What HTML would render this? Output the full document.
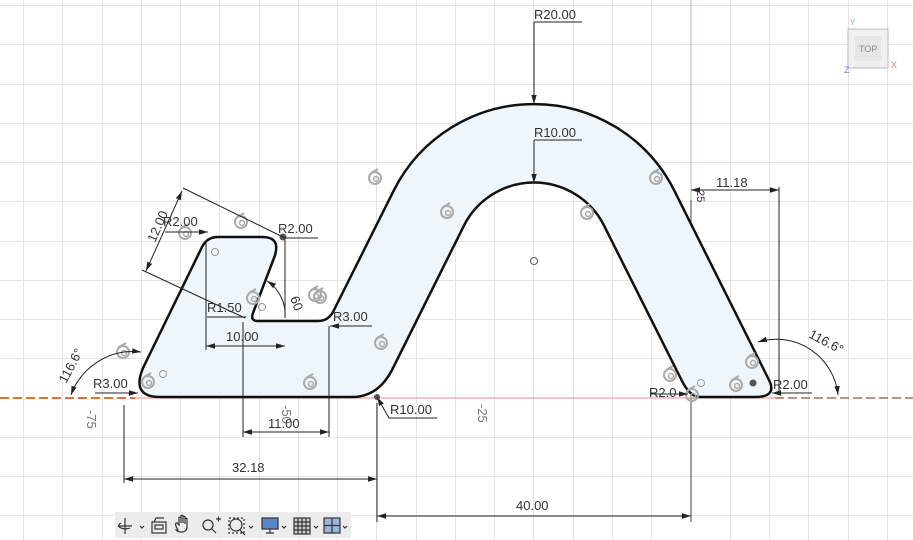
<!DOCTYPE html>
<html><head><meta charset="utf-8"><style>
html,body{margin:0;padding:0;background:#fff;width:913px;height:540px;overflow:hidden}
svg{display:block}
text{font-family:"Liberation Sans",sans-serif;font-size:13px;fill:#333}
</style></head><body>
<svg width="913" height="540" viewBox="0 0 913 540" xmlns="http://www.w3.org/2000/svg">
<defs>
<marker id="a" viewBox="0 0 10 10" refX="10" refY="5" markerWidth="9" markerHeight="9" orient="auto-start-reverse"><path d="M0 2L10 5L0 8z" fill="#222"/></marker>
<g id="c"><circle cx="0" cy="0" r="6" fill="none" stroke="#aaa" stroke-width="2"/><circle cx="1" cy="1" r="2.5" fill="none" stroke="#aaa" stroke-width="1.5"/><path d="M-4 -5L3 -9" stroke="#aaa" stroke-width="2"/></g>
</defs>
<rect width="913" height="540" fill="#fff"/>
<path stroke="#e4e4e4" stroke-width="1" fill="none" d="
M23.5 0V540M62.5 0V540M102.5 0V540M141.5 0V540M180.5 0V540M219.5 0V540M259.5 0V540M298.5 0V540M337.5 0V540M376.5 0V540M416.5 0V540M455.5 0V540M494.5 0V540M533.5 0V540M573.5 0V540M612.5 0V540M651.5 0V540M730.5 0V540M769.5 0V540M808.5 0V540M848.5 0V540M887.5 0V540
M0 5.5H913M0 44.5H913M0 84.5H913M0 123.5H913M0 162.5H913M0 201.5H913M0 241.5H913M0 280.5H913M0 319.5H913M0 358.5H913M0 437.5H913M0 476.5H913M0 515.5H913"/>
<!-- axes -->
<line x1="130" y1="398" x2="775" y2="398" stroke="#f4b0b0" stroke-width="1.5"/>
<line x1="0" y1="398" x2="135" y2="398" stroke="#d9733a" stroke-width="2" stroke-dasharray="9,4"/>
<line x1="775" y1="398" x2="913" y2="398" stroke="#a0705a" stroke-width="1.5" stroke-dasharray="9,4"/>
<line x1="691" y1="0" x2="691" y2="200" stroke="#8fd88f" stroke-width="1"/>
<line x1="691" y1="200" x2="691" y2="522" stroke="#444" stroke-width="1"/>
<!-- shape -->
<path d="M160 397 L352 397 Q378 397 392 370 L463.8 225.9 A78.5 78.5 0 0 1 604.2 225.9 L682 381 Q690 397 700 397 L755 397 Q777.5 397 769 380 L674.4 190.8 A157 157 0 0 0 393.6 190.8 L334 310 Q329 321 318 321 L258 321 Q250 321 253 313 L274 258 Q282 237 262 237 L218 237 Q207 237 202 247 L143 368 Q131 397 160 397 Z" fill="#eef6fc" stroke="#111" stroke-width="2.5"/>
<circle cx="534" cy="261" r="3.5" fill="none" stroke="#555"/>
<circle cx="215" cy="252" r="3.5" fill="none" stroke="#999"/>
<circle cx="163" cy="374" r="3.5" fill="none" stroke="#999"/>
<circle cx="262" cy="307" r="3.5" fill="none" stroke="#999"/>
<circle cx="701" cy="383" r="3.5" fill="none" stroke="#999"/>
<circle cx="753" cy="383" r="3.5" fill="#555"/>
<circle cx="283" cy="237" r="3.5" fill="#555"/>
<circle cx="377" cy="397" r="3" fill="#555"/>
<!-- constraint icons -->
<use href="#c" x="375" y="178"/><use href="#c" x="447" y="212"/><use href="#c" x="241" y="222"/>
<use href="#c" x="185" y="233"/><use href="#c" x="587" y="213"/><use href="#c" x="656" y="178"/>
<use href="#c" x="315" y="295"/><use href="#c" x="123" y="352"/><use href="#c" x="148" y="382"/>
<use href="#c" x="310" y="383"/><use href="#c" x="381" y="343"/><use href="#c" x="752" y="362"/>
<use href="#c" x="736" y="385"/><use href="#c" x="670" y="375"/><use href="#c" x="692" y="395"/>
<use href="#c" x="253" y="298"/><use href="#c" x="320" y="297"/>
<g stroke="#222" stroke-width="1" fill="none">
<path d="M534 22H582M534 22V104" marker-end="url(#a)"/>
<path d="M534 140H582M534 140V183" marker-end="url(#a)"/>
<line x1="779" y1="187" x2="779" y2="395"/>
<line x1="691" y1="190" x2="779" y2="190" marker-start="url(#a)" marker-end="url(#a)"/>
<path d="M758 342 A62 62 0 0 1 838 395" marker-start="url(#a)" marker-end="url(#a)"/>
<path d="M812 393H772" marker-end="url(#a)"/>
<path d="M650 394H688" marker-end="url(#a)"/>
<path d="M141 352 A66 66 0 0 0 71 395" marker-start="url(#a)" marker-end="url(#a)"/>
<path d="M95 393H138" marker-end="url(#a)"/>
<path d="M437 418H389L377 397" marker-end="url(#a)"/>
<line x1="124" y1="405" x2="124" y2="483"/>
<line x1="377" y1="403" x2="377" y2="522"/>
<line x1="124" y1="479" x2="377" y2="479" marker-start="url(#a)" marker-end="url(#a)"/>
<line x1="377" y1="516" x2="691" y2="516" marker-start="url(#a)" marker-end="url(#a)"/>
<line x1="243" y1="322" x2="243" y2="437"/>
<line x1="329" y1="326" x2="329" y2="437"/>
<line x1="243" y1="432" x2="329" y2="432" marker-start="url(#a)" marker-end="url(#a)"/>
<line x1="206" y1="240" x2="206" y2="350"/>
<line x1="285" y1="240" x2="285" y2="318"/>
<line x1="206" y1="346" x2="285" y2="346" marker-start="url(#a)" marker-end="url(#a)"/>
<path d="M207 317H246"/>
<path d="M372 326H330" marker-end="url(#a)"/>
<path d="M318 238H283"/>
<path d="M165 232H208" marker-end="url(#a)"/>
<line x1="183" y1="188" x2="283" y2="237"/>
<line x1="142" y1="270" x2="245" y2="318"/>
<line x1="182" y1="191" x2="146" y2="271" marker-start="url(#a)" marker-end="url(#a)"/>
<path d="M267 281 A40 40 0 0 1 285 318" marker-start="url(#a)"/>
</g>
<g>
<text x="534" y="19">R20.00</text>
<text x="534" y="137">R10.00</text>
<text x="716" y="187">11.18</text>
<text x="0" y="0" transform="translate(697,190) rotate(90)" style="font-size:11px">25</text>
<text x="0" y="0" transform="translate(808,337) rotate(28)">116.6°</text>
<text x="0" y="0" transform="translate(66,384) rotate(-62)">116.6°</text>
<text x="773" y="389">R2.00</text>
<text x="649" y="397">R2.0</text>
<text x="93" y="388">R3.00</text>
<text x="0" y="0" transform="translate(87,410) rotate(90)" style="fill:#777">-75</text>
<text x="0" y="0" transform="translate(282,405) rotate(90)" style="fill:#777">-50</text>
<text x="0" y="0" transform="translate(478,404) rotate(90)" style="fill:#777">-25</text>
<text x="390" y="414">R10.00</text>
<text x="232" y="472">32.18</text>
<text x="516" y="510">40.00</text>
<text x="268" y="428">11.00</text>
<text x="226" y="341">10.00</text>
<text x="207" y="312">R1.50</text>
<text x="333" y="321">R3.00</text>
<text x="278" y="233">R2.00</text>
<text x="163" y="226">R2.00</text>
<text x="0" y="0" transform="translate(155,243) rotate(-66)">12.00</text>
<text x="0" y="0" transform="translate(290,298) rotate(70)">60</text>
</g>
<!-- viewcube -->
<rect x="848" y="29" width="40" height="39" fill="#f0f0f0" stroke="#bbb"/>
<rect x="855" y="36" width="26" height="25" fill="#e6e6e6"/>
<text x="859" y="52" style="font-size:9px;fill:#888">TOP</text>
<text x="850" y="25" style="font-size:8px;fill:#7c7">Y</text>
<text x="891" y="68" style="font-size:9px;fill:#e77">X</text>
<text x="844" y="73" style="font-size:9px;fill:#77e">Z</text>
<!-- toolbar -->
<rect x="115" y="512" width="236" height="26" fill="#ececec"/>
<g stroke="#333" fill="none" stroke-width="1.2">
<path d="M125 518V534M118 526H132M121 523A6 3 0 1 0 130 528"/>
<path d="M140 526l2 2 2-2"/>
<rect x="152" y="522" width="14" height="11"/><rect x="155" y="525" width="8" height="4"/><path d="M154 522l2-4h8"/>
<path d="M178 530c-2-3-3-6-2-7s2 1 3 2v-7c0-1 2-1 2 0v5v-7c0-1 2-1 2 0v7v-6c0-1 2-1 2 0v7v-5c0-1 2-1 2 0v8c0 3-2 5-5 5h-2c-2 0-3-1-4-2z"/>
<circle cx="208" cy="525" r="5"/><path d="M212 529l4 4M216 519h5M218.5 516.5v5"/>
<circle cx="236" cy="525" r="6"/><path d="M240 530l5 5"/><rect x="229" y="518" width="15" height="15" stroke-dasharray="2,2"/>
<path d="M249 526l2 2 2-2"/>
<rect x="262" y="518" width="16" height="11" fill="#5b86c5"/><path d="M266 533h8M270 529v4"/>
<path d="M282 526l2 2 2-2"/>
<rect x="294" y="518" width="16" height="16" fill="#ccc"/><path d="M298 518v16M302 518v16M306 518v16M294 522h16M294 526h16M294 530h16"/>
<path d="M314 526l2 2 2-2"/>
<rect x="324" y="518" width="16" height="15" fill="#9bb6dd"/><path d="M324 525.5h16M332 518v15"/>
<path d="M343 526l2 2 2-2"/>
</g>
</svg>
</body></html>
